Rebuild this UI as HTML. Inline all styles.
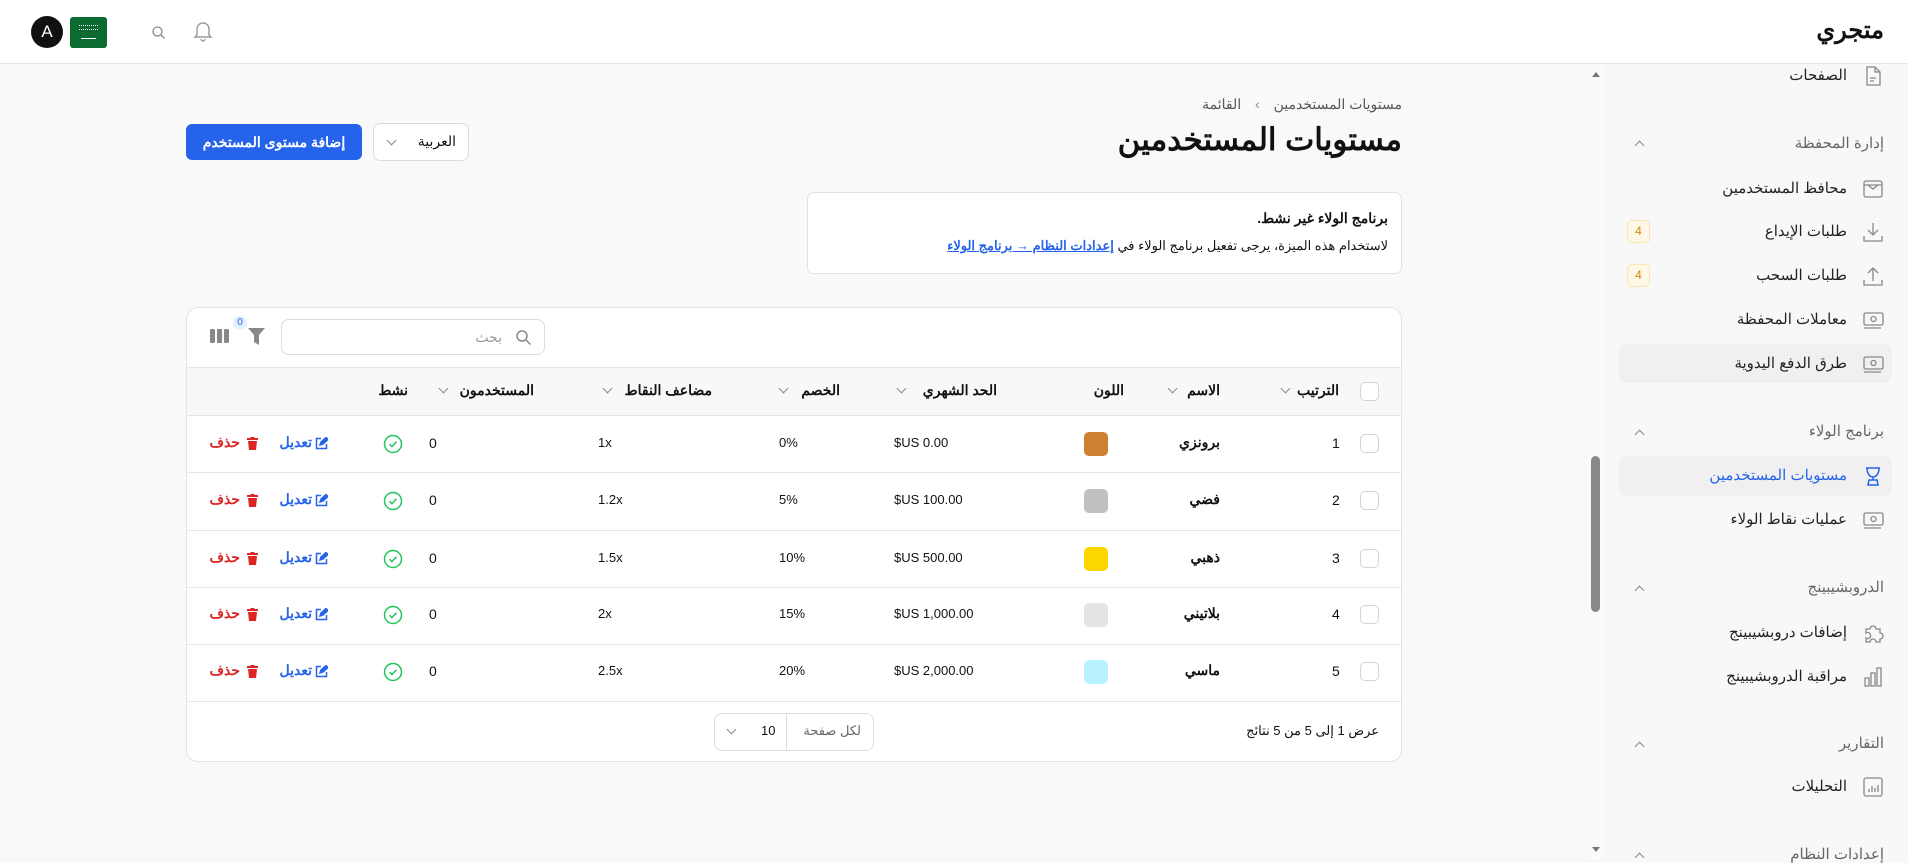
<!DOCTYPE html>
<html lang="ar" dir="rtl"><head><meta charset="utf-8">
<style>
*{box-sizing:border-box;margin:0;padding:0}
body{width:1908px;height:860px;overflow:hidden;background:#f9f9f9;font-family:"Liberation Sans","Noto Sans CJK SC",sans-serif;color:#111;position:relative}
.a{position:absolute;white-space:nowrap;direction:ltr}
.r{position:absolute;white-space:nowrap;direction:rtl}
.hdr{position:absolute;left:0;top:0;width:1908px;height:64px;background:#fff;border-bottom:1px solid #e3e3e3}
.side{position:absolute;left:1604px;top:64px;width:304px;height:796px;background:#f8f8f8}
.sb{position:absolute;left:1588px;top:64px;width:16px;height:796px;background:#fafafa}
.si{font-size:15px;color:#222}
.sh{font-size:15px;color:#666}
.ic{position:absolute;width:22px;height:22px}
.card{position:absolute;left:186px;top:307px;width:1216px;height:455px;background:#fff;border:1px solid #e4e4e4;border-radius:12px}
.th{font-size:14px;font-weight:bold;color:#111}
.td{font-size:14px;color:#111}
.cb{position:absolute;width:19px;height:19px;border:1px solid #d4d4d4;border-radius:5px;background:#fff}
.chev{position:absolute;width:7px;height:7px;border-right:1.3px solid #888;border-bottom:1.3px solid #888;transform:rotate(45deg)}
.line{position:absolute;left:186px;width:1216px;height:1px;background:#e6e6e6}
</style></head><body>
<div class="hdr"></div>
<div class="r" style="right:24px;top:16px;font-size:24px;font-weight:bold">متجري</div>
<div class="a" style="left:31px;top:16px;width:32px;height:32px;border-radius:50%;background:#111;color:#fff;font-size:17px;text-align:center;line-height:32px">A</div>
<div class="a" style="left:70px;top:17px;width:37px;height:31px;border-radius:3px;background:#0b6b30"><div style="position:absolute;left:9px;top:8px;width:19px;height:5px;border-top:1px dotted #fff;border-bottom:1px dotted #fff"></div><div style="position:absolute;left:11px;top:21px;width:15px;height:1px;background:#fff"></div></div>
<svg class="a" style="left:151px;top:25px" width="15" height="15" viewBox="0 0 15 15" fill="none" stroke="#888" stroke-width="1.3"><circle cx="6.5" cy="6.5" r="4.5"/><path d="M10 10l3.5 3.5"/></svg>
<svg class="a" style="left:193px;top:20px" width="20" height="22" viewBox="0 0 20 22" fill="none" stroke="#999" stroke-width="1.4"><path d="M4 15V9a6 6 0 0112 0v6l2 2H2z"/><path d="M8 19a2 2 0 004 0"/></svg>

<div class="sb"><div style="position:absolute;left:3px;top:392px;width:9px;height:156px;border-radius:5px;background:#888"></div>
<div style="position:absolute;left:4px;top:8px;border:4px solid transparent;border-bottom:5px solid #777;border-top:0"></div>
<div style="position:absolute;left:4px;top:783px;border:4px solid transparent;border-top:5px solid #777;border-bottom:0"></div></div>
<div class="side"></div>
<div class="a" style="left:1619px;top:344px;width:273px;height:39px;background:#f0f0f0;border-radius:8px"></div>
<div class="a" style="left:1619px;top:456px;width:273px;height:40px;background:#f0f0f0;border-radius:8px"></div>

<svg class="ic" style="left:1862px;top:65px" viewBox="0 0 22 22" fill="none" stroke="#888" stroke-width="1.3"><path d="M5 2h8l5 5v13H5z"/><path d="M13 2v5h5M8 13h6M8 16h4"/></svg>
<div class="r si" style="right:61px;top:66px">الصفحات</div>
<div class="r sh" style="right:24px;top:134px">إدارة المحفظة</div>
<div class="chev" style="left:1636px;top:142px;transform:rotate(225deg)"></div>
<svg class="ic" style="left:1862px;top:178px" viewBox="0 0 22 22" fill="none" stroke="#888" stroke-width="1.3"><rect x="2" y="3" width="18" height="16" rx="2"/><path d="M2 7h18M6 7l5 4 5-4"/></svg>
<div class="r si" style="right:61px;top:179px">محافظ المستخدمين</div>
<svg class="ic" style="left:1862px;top:221px" viewBox="0 0 22 22" fill="none" stroke="#888" stroke-width="1.3"><path d="M11 2v12M6 9l5 5 5-5M2 15v5h18v-5"/></svg>
<div class="r si" style="right:61px;top:222px">طلبات الإيداع</div>
<div class="a" style="left:1627px;top:220px;width:23px;height:23px;border:1px solid #fbe5b0;background:#fff8e6;border-radius:5px;color:#d08a10;font-size:12px;text-align:center;line-height:21px">4</div>
<svg class="ic" style="left:1862px;top:265px" viewBox="0 0 22 22" fill="none" stroke="#888" stroke-width="1.3"><path d="M11 16V3M6 8l5-5 5 5M2 15v5h18v-5"/></svg>
<div class="r si" style="right:61px;top:266px">طلبات السحب</div>
<div class="a" style="left:1627px;top:264px;width:23px;height:23px;border:1px solid #fbe5b0;background:#fff8e6;border-radius:5px;color:#d08a10;font-size:12px;text-align:center;line-height:21px">4</div>
<svg class="ic" style="left:1862px;top:309px" viewBox="0 0 22 22" fill="none" stroke="#888" stroke-width="1.3"><rect x="2" y="4" width="19" height="12" rx="1.5"/><circle cx="11.5" cy="10" r="2.5"/><path d="M2 19h17"/></svg>
<div class="r si" style="right:61px;top:310px">معاملات المحفظة</div>
<svg class="ic" style="left:1862px;top:353px" viewBox="0 0 22 22" fill="none" stroke="#888" stroke-width="1.3"><rect x="2" y="4" width="19" height="12" rx="1.5"/><circle cx="11.5" cy="10" r="2.5"/><path d="M2 19h17"/></svg>
<div class="r si" style="right:61px;top:354px">طرق الدفع اليدوية</div>
<div class="r sh" style="right:24px;top:422px">برنامج الولاء</div>
<div class="chev" style="left:1636px;top:431px;transform:rotate(225deg)"></div>
<svg class="ic" style="left:1862px;top:465px" viewBox="0 0 22 22" fill="none" stroke="#2563eb" stroke-width="1.5"><path d="M4 3h14M5 3c0 6 3 9 6 9s6-3 6-9M11 12v3M7 15h8l1 5H6z"/></svg>
<div class="r si" style="right:61px;top:466px;color:#2563eb">مستويات المستخدمين</div>
<svg class="ic" style="left:1862px;top:509px" viewBox="0 0 22 22" fill="none" stroke="#888" stroke-width="1.3"><rect x="2" y="4" width="19" height="12" rx="1.5"/><circle cx="11.5" cy="10" r="2.5"/><path d="M2 19h17"/></svg>
<div class="r si" style="right:61px;top:510px">عمليات نقاط الولاء</div>
<div class="r sh" style="right:24px;top:578px">الدروبشيبينج</div>
<div class="chev" style="left:1636px;top:587px;transform:rotate(225deg)"></div>
<svg class="ic" style="left:1862px;top:622px" viewBox="0 0 22 22" fill="none" stroke="#888" stroke-width="1.3"><path d="M4 7h4a3 3 0 116 0h4v4a3 3 0 110 6v3h-4a3 3 0 10-6 0H4v-4a3 3 0 100-5z"/></svg>
<div class="r si" style="right:61px;top:623px">إضافات دروبشيبينج</div>
<svg class="ic" style="left:1862px;top:666px" viewBox="0 0 22 22" fill="none" stroke="#888" stroke-width="1.3"><rect x="3" y="12" width="4" height="8"/><rect x="9" y="7" width="4" height="13"/><rect x="15" y="2" width="4" height="18"/></svg>
<div class="r si" style="right:61px;top:667px">مراقبة الدروبشيبينج</div>
<div class="r sh" style="right:24px;top:734px">التقارير</div>
<div class="chev" style="left:1636px;top:743px;transform:rotate(225deg)"></div>
<svg class="ic" style="left:1862px;top:776px" viewBox="0 0 22 22" fill="none" stroke="#888" stroke-width="1.3"><rect x="2" y="2" width="18" height="18" rx="2"/><path d="M7 16v-3M10 16v-6M13 16v-4M16 16v-7"/></svg>
<div class="r si" style="right:61px;top:777px">التحليلات</div>
<div class="r sh" style="right:24px;top:845px">إعدادات النظام</div>
<div class="chev" style="left:1636px;top:854px;transform:rotate(225deg)"></div>

<div class="r" style="right:506px;top:96px;font-size:14px;color:#555">مستويات المستخدمين <span style="margin:0 10px;color:#888">&rsaquo;</span> القائمة</div>
<div class="r" style="right:506px;top:122px;font-size:31px;font-weight:bold">مستويات المستخدمين</div>
<div class="a" style="left:186px;top:124px;width:176px;height:36px;background:#2563eb;border-radius:6px;color:#fff;font-size:14px;font-weight:bold;text-align:center;line-height:36px">إضافة مستوى المستخدم</div>
<div class="a" style="left:373px;top:123px;width:96px;height:38px;background:#fff;border:1px solid #dcdcdc;border-radius:7px"><span class="r" style="right:12px;top:9px;font-size:14px">العربية</span><div class="chev" style="left:14px;top:13px"></div></div>
<div class="a" style="left:807px;top:192px;width:595px;height:82px;background:#fff;border:1px solid #e2e2e2;border-radius:7px"></div>
<div class="r" style="right:520px;top:210px;font-size:14px;font-weight:bold">برنامج الولاء غير نشط.</div>
<div class="r" style="right:520px;top:238px;font-size:13px">لاستخدام هذه الميزة، يرجى تفعيل برنامج الولاء في <span style="color:#2563eb;text-decoration:underline;font-weight:bold">إعدادات النظام → برنامج الولاء</span></div>

<div class="card"></div>
<div class="a" style="left:281px;top:319px;width:264px;height:36px;border:1px solid #dcdcdc;border-radius:8px;background:#fff"><span class="r" style="right:42px;top:9px;font-size:14px;color:#999">بحث</span>
<svg class="a" style="right:12px;top:9px" width="17" height="17" viewBox="0 0 17 17" fill="none" stroke="#888" stroke-width="1.5"><circle cx="7" cy="7" r="5"/><path d="M11 11l4.5 4.5"/></svg></div>
<svg class="a" style="left:210px;top:329px" width="19" height="14" viewBox="0 0 19 14" fill="#888"><rect x="0" y="0" width="5" height="14" rx="1.5"/><rect x="7" y="0" width="5" height="14"/><rect x="14" y="0" width="5" height="14" rx="1.5"/></svg>
<svg class="a" style="left:248px;top:328px" width="17" height="17" viewBox="0 0 17 17" fill="#888"><path d="M0 0h17l-6 7v10l-5-3V7z"/></svg>
<div class="a" style="left:233px;top:316px;width:14px;height:14px;border-radius:7px;background:#e6efff;color:#2563eb;font-size:10px;text-align:center;line-height:14px">0</div>
<div class="line" style="top:367px"></div>
<div class="a" style="left:187px;top:368px;width:1214px;height:47px;background:#f8f8f8"></div>
<div class="line" style="top:415px"></div>
<div class="line" style="top:472px"></div>
<div class="line" style="top:530px"></div>
<div class="line" style="top:587px"></div>
<div class="line" style="top:644px"></div>
<div class="line" style="top:701px"></div>

<div class="cb" style="left:1360px;top:382px"></div>
<div class="r th" style="right:569px;top:382px">الترتيب</div><div class="chev" style="left:1282px;top:385px"></div>
<div class="r th" style="right:688px;top:382px">الاسم</div><div class="chev" style="left:1169px;top:385px"></div>
<div class="r th" style="right:784px;top:382px">اللون</div>
<div class="r th" style="right:911px;top:382px">الحد الشهري</div><div class="chev" style="left:898px;top:385px"></div>
<div class="r th" style="right:1068px;top:382px">الخصم</div><div class="chev" style="left:780px;top:385px"></div>
<div class="r th" style="right:1196px;top:382px">مضاعف النقاط</div><div class="chev" style="left:604px;top:385px"></div>
<div class="r th" style="right:1374px;top:382px">المستخدمون</div><div class="chev" style="left:440px;top:385px"></div>
<div class="r th" style="right:1500px;top:382px">نشط</div>

<div id="rows"></div>
<script>
var d=[["1","برونزي","#cd7f32","$US 0.00","0%","1x"],["2","فضي","#c0c0c0","$US 100.00","5%","1.2x"],["3","ذهبي","#ffd700","$US 500.00","10%","1.5x"],["4","بلاتيني","#e5e4e2","$US 1,000.00","15%","2x"],["5","ماسي","#b9f2ff","$US 2,000.00","20%","2.5x"]];
var ys=[444,501,559,615,672],h="";
d.forEach(function(r,i){var y=ys[i];
h+='<div class="cb" style="left:1360px;top:'+(y-10)+'px"></div>';
h+='<div class="a td" style="left:1332px;top:'+(y-9)+'px">'+r[0]+'</div>';
h+='<div class="r td" style="right:688px;top:'+(y-10)+'px;font-weight:bold">'+r[1]+'</div>';
h+='<div class="a" style="left:1084px;top:'+(y-12)+'px;width:24px;height:24px;border-radius:5px;background:'+r[2]+'"></div>';
h+='<div class="a td" style="left:894px;top:'+(y-9)+'px;font-size:13px">'+r[3]+'</div>';
h+='<div class="a td" style="left:779px;top:'+(y-9)+'px;font-size:13px">'+r[4]+'</div>';
h+='<div class="a td" style="left:598px;top:'+(y-9)+'px;font-size:13px">'+r[5]+'</div>';
h+='<div class="a td" style="left:429px;top:'+(y-9)+'px">0</div>';
h+='<svg class="a" style="left:383px;top:'+(y-10)+'px" width="20" height="20" viewBox="0 0 20 20" fill="none" stroke="#22c55e" stroke-width="1.5"><circle cx="10" cy="10" r="8.5"/><path d="M6.5 10.2l2.4 2.4 4.6-4.8"/></svg>';
h+='<svg class="a" style="left:315px;top:'+(y-7)+'px" width="13" height="13" viewBox="0 0 13 13" fill="none" stroke="#2563eb" stroke-width="1.5"><path d="M6 1.5H1.5v10h10V7"/><path d="M5 8l1-3 5-4.5 2 2L8 7z" fill="#2563eb"/></svg>';
h+='<div class="r" style="right:1596px;top:'+(y-10)+'px;font-size:14px;font-weight:bold;color:#2563eb">تعديل</div>';
h+='<svg class="a" style="left:247px;top:'+(y-7)+'px" width="11" height="13" viewBox="0 0 11 13" fill="#dc2626"><rect x="0" y="1" width="11" height="2"/><rect x="3.5" y="0" width="4" height="2"/><path d="M1 4h9l-1 9H2z"/></svg>';
h+='<div class="r" style="right:1668px;top:'+(y-10)+'px;font-size:14px;font-weight:bold;color:#dc2626">حذف</div>';
});
document.getElementById('rows').innerHTML=h;
</script>

<div class="r" style="right:529px;top:723px;font-size:13px">عرض 1 إلى 5 من 5 نتائج</div>
<div class="a" style="left:714px;top:713px;width:160px;height:38px;border:1px solid #dcdcdc;border-radius:8px;background:#fff">
<div style="position:absolute;left:71px;top:0;width:1px;height:36px;background:#dcdcdc"></div>
<span class="r" style="right:12px;top:9px;font-size:13px;color:#666">لكل صفحة</span>
<span class="a" style="left:46px;top:9px;font-size:13px">10</span>
<div class="chev" style="left:13px;top:12px"></div></div>
</body></html>
